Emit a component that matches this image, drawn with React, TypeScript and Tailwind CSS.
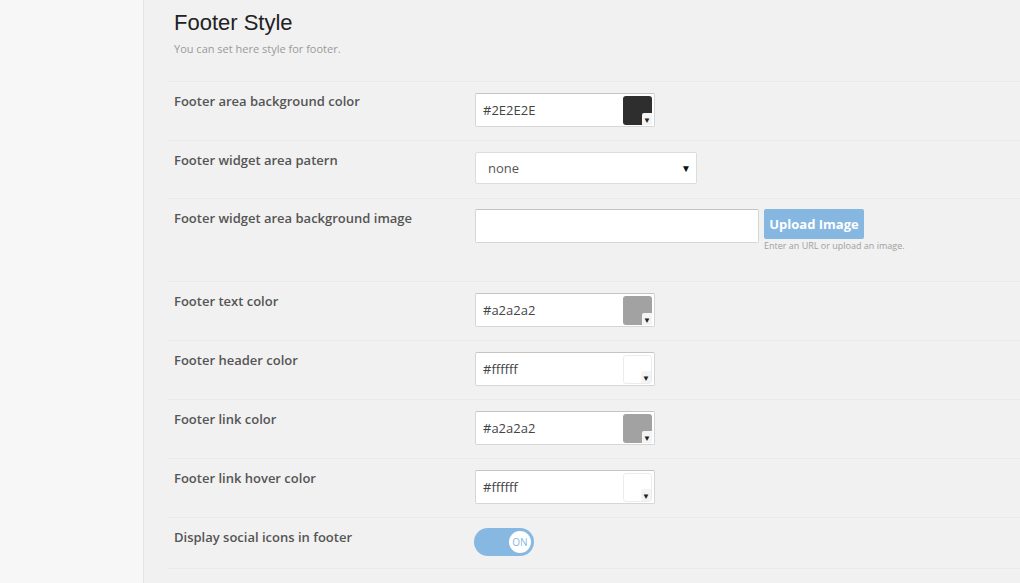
import React from "react";

type ColorRow = { label: string; value: string; swatch: string };

const topColor: ColorRow = { label: "Footer area background color", value: "#2E2E2E", swatch: "#2e2e2e" };

const colorRows: ColorRow[] = [
  { label: "Footer text color", value: "#a2a2a2", swatch: "#a2a2a2" },
  { label: "Footer header color", value: "#ffffff", swatch: "#ffffff" },
  { label: "Footer link color", value: "#a2a2a2", swatch: "#a2a2a2" },
  { label: "Footer link hover color", value: "#ffffff", swatch: "#ffffff" },
];

function Label({ children }: { children: React.ReactNode }) {
  return (
    <div className="w-[301px] shrink-0 pt-[9px] text-[13px] leading-[20px] font-semibold text-[#555]">
      {children}
    </div>
  );
}

function ColorInput({ value, swatch }: { value: string; swatch: string }) {
  const white = swatch.toLowerCase() === "#ffffff";
  return (
    <div className="mt-[11px] flex h-[34px] w-[180px] items-center justify-between rounded-[2px] border border-[#d6d6d6] border-t-[#c4c4c4] bg-white pl-[7px] pr-[2px]">
      <span className="pt-[2px] text-[13px] text-[#444]">{value}</span>
      <div
        className={
          "relative h-[29px] w-[29px] rounded-[3px] " + (white ? "border border-[#ececec]" : "")
        }
        style={{ backgroundColor: swatch }}
      >
        <div className="absolute right-0 bottom-0 flex h-[12px] w-[10px] items-end justify-center rounded-tl-[2px] bg-[#f4f4f4] pb-[1px] text-[8px] leading-none text-[#222]">
          ▼
        </div>
      </div>
    </div>
  );
}

function Row({ children, className = "" }: { children: React.ReactNode; className?: string }) {
  return (
    <div className={"flex border-t border-[#eaeaea] pl-[6px] " + className}>{children}</div>
  );
}

export default function App() {
  return (
    <div
      className="flex h-[583px] w-full overflow-hidden bg-[#f1f1f1]"
      style={{ fontFamily: '"Open Sans", "Liberation Sans", sans-serif' }}
    >
      <aside className="w-[144px] shrink-0 border-r border-[#e4e4e4] bg-[#f7f7f7]" />
      <main className="flex-1 pl-[24px]">
        <div className="h-[81px] pl-[6px] pt-[9px]">
          <h2
            className="text-[22px] leading-[28px] text-[#222]"
            style={{ fontFamily: '"Liberation Sans", Arial, sans-serif' }}
          >
            Footer Style
          </h2>
          <p className="mt-[4px] text-[11px] leading-[16px] text-[#9a9a9a]">
            You can set here style for footer.
          </p>
        </div>

        <Row className="h-[59px]">
          <Label>{topColor.label}</Label>
          <ColorInput value={topColor.value} swatch={topColor.swatch} />
        </Row>

        <Row className="h-[58px]">
          <Label>Footer widget area patern</Label>
          <div className="mt-[11px] flex h-[32px] w-[222px] items-center justify-between rounded-[2px] border border-[#dcdcdc] bg-white pl-[12px] pr-[5px]">
            <span className="pt-[1px] text-[13px] text-[#555]">none</span>
            <span className="text-[10px] text-[#111]">▼</span>
          </div>
        </Row>

        <Row className="h-[83px]">
          <Label>Footer widget area background image</Label>
          <div className="mt-[10px] flex items-start gap-[5px]">
            <div className="h-[34px] w-[284px] rounded-[2px] border border-[#d6d6d6] border-t-[#c4c4c4] bg-white" />
            <div>
              <button className="h-[30px] w-[100px] rounded-[2px] bg-[#86b7e1] pt-[2px] text-[13px] font-bold text-white">
                Upload Image
              </button>
              <p className="mt-[1px] text-[9px] leading-[12px] text-[#a0a0a0]">
                Enter an URL or upload an image.
              </p>
            </div>
          </div>
        </Row>

        {colorRows.map((r) => (
          <Row key={r.label} className="h-[59px]">
            <Label>{r.label}</Label>
            <ColorInput value={r.value} swatch={r.swatch} />
          </Row>
        ))}

        <Row className="h-[51px]">
          <Label>Display social icons in footer</Label>
          <div className="-ml-[1px] mt-[10px] flex h-[28px] w-[60px] items-center justify-end rounded-full bg-[#86b8e1] pr-[3px]">
            <div className="flex h-[22px] w-[22px] items-center justify-center rounded-full bg-white text-[10px] text-[#86b8e1]">
              ON
            </div>
          </div>
        </Row>
        <div className="border-t border-[#eaeaea]" />
      </main>
    </div>
  );
}
